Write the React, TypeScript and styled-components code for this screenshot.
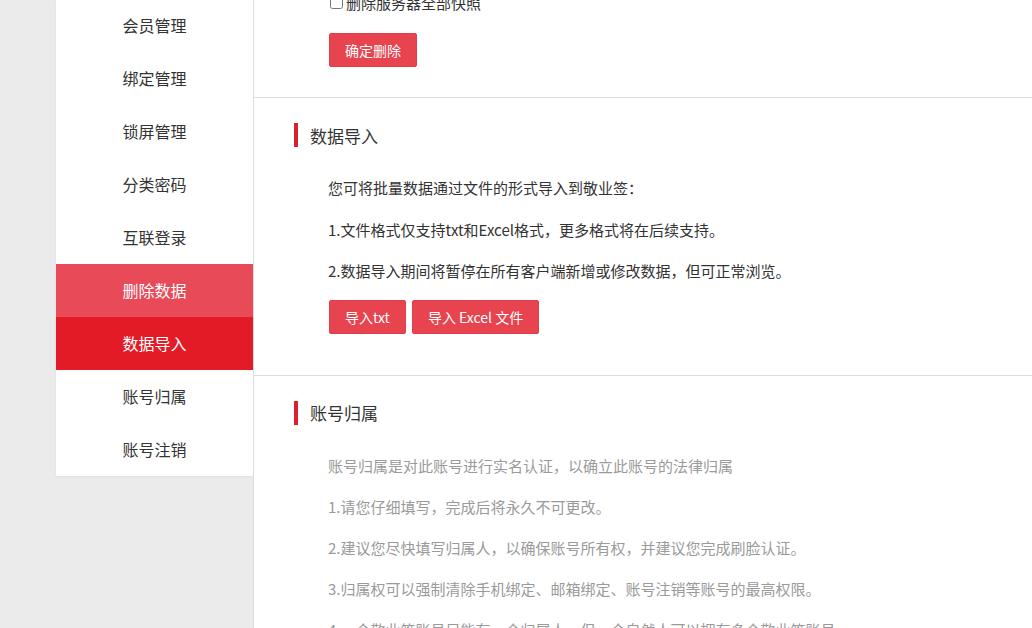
import React from "react";
import styled, { createGlobalStyle } from "styled-components";

const GlobalStyle = createGlobalStyle`
  html, body {
    margin: 0;
    padding: 0;
    background: #ebebeb;
  }
  body {
    font-family: "Noto Sans CJK SC", "Noto Sans", sans-serif;
    color: #333;
  }
`;

const Page = styled.div`
  display: flex;
  height: 628px;
  overflow: hidden;
  padding-left: 56px;
`;

const Sidebar = styled.ul`
  width: 197px;
  flex: none;
  align-self: flex-start;
  margin: 0;
  padding: 0;
  list-style: none;
  background: #fff;
  box-shadow: 0 1px 3px rgba(0, 0, 0, 0.05);
`;

const NavItem = styled.li<{ $state?: "hover" | "active" }>`
  height: 52.9px;
  display: flex;
  align-items: center;
  justify-content: center;
  padding-bottom: 2px;
  box-sizing: border-box;
  font-size: 16px;
  color: ${({ $state }) => ($state ? "#fff" : "#333")};
  background: ${({ $state }) =>
    $state === "active" ? "#e21b26" : $state === "hover" ? "#e84a58" : "#fff"};
  cursor: pointer;
`;

const Main = styled.main`
  flex: 1;
  background: #fff;
  border-left: 1px solid #dcdcdc;
  overflow: hidden;
`;

const Section = styled.section<{ $top?: number; $bottom: number; $offset?: number }>`
  padding: ${({ $top = 25 }) => $top}px 0 ${({ $bottom }) => $bottom}px;
  margin-top: ${({ $offset = 0 }) => $offset}px;
  border-bottom: 1px solid #dcdcdc;
`;

const Title = styled.h2`
  display: flex;
  align-items: center;
  gap: 12px;
  height: 24px;
  margin: 0 0 20px 40px;
  font-size: 17px;
  font-weight: normal;
  color: #333;

  &::before {
    content: "";
    width: 4px;
    height: 24px;
    background: #d9202c;
  }
`;

const Body = styled.div<{ $muted?: boolean }>`
  padding-left: 74px;
  font-size: 15px;
  color: ${({ $muted }) => ($muted ? "#9a9a9a" : "#333")};
`;

const Line = styled.p<{ $height?: number }>`
  margin: 0;
  line-height: ${({ $height = 41 }) => $height}px;
  white-space: nowrap;
`;

const CheckRow = styled.label`
  display: flex;
  align-items: center;
  gap: 3px;
  height: 22px;
  font-size: 15px;
  color: #333;

  input {
    width: 13px;
    height: 13px;
    margin: 0 0 0 2px;
  }
`;

const Actions = styled.div<{ $gap?: number }>`
  display: flex;
  gap: 6px;
  margin-top: ${({ $gap = 8 }) => $gap}px;
  padding-left: 1px;
`;

const Button = styled.button`
  height: 34px;
  padding: 0 15px;
  border: 1px solid #e03e4c;
  border-radius: 2px;
  background: #e8444f;
  color: #fff;
  font-family: inherit;
  font-size: 14px;
  cursor: pointer;
`;

const navItems = [
  "会员管理",
  "绑定管理",
  "锁屏管理",
  "分类密码",
  "互联登录",
  "删除数据",
  "数据导入",
  "账号归属",
  "账号注销",
];

const ownershipLines = [
  "账号归属是对此账号进行实名认证，以确立此账号的法律归属",
  "1.请您仔细填写，完成后将永久不可更改。",
  "2.建议您尽快填写归属人，以确保账号所有权，并建议您完成刷脸认证。",
  "3.归属权可以强制清除手机绑定、邮箱绑定、账号注销等账号的最高权限。",
  "4.一个敬业签账号只能有一个归属人，但一个自然人可以拥有多个敬业签账号。",
];

const App: React.FC = () => {
  return (
    <>
      <GlobalStyle />
      <Page>
        <Sidebar>
          {navItems.map((item) => (
            <NavItem
              key={item}
              $state={
                item === "删除数据" ? "hover" : item === "数据导入" ? "active" : undefined
              }
            >
              {item}
            </NavItem>
          ))}
        </Sidebar>

        <Main>
          <Section $top={0} $bottom={30} $offset={-9}>
            <Body>
              <CheckRow>
                <input type="checkbox" />
                删除服务器全部快照
              </CheckRow>
              <Actions $gap={20}>
                <Button>确定删除</Button>
              </Actions>
            </Body>
          </Section>

          <Section $bottom={41}>
            <Title>数据导入</Title>
            <Body>
              <Line $height={41.5}>您可将批量数据通过文件的形式导入到敬业签：</Line>
              <Line $height={41.5}>1.文件格式仅支持txt和Excel格式，更多格式将在后续支持。</Line>
              <Line $height={41.5}>2.数据导入期间将暂停在所有客户端新增或修改数据，但可正常浏览。</Line>
              <Actions>
                <Button>导入txt</Button>
                <Button>导入 Excel 文件</Button>
              </Actions>
            </Body>
          </Section>

          <Section $bottom={30}>
            <Title>账号归属</Title>
            <Body $muted>
              {ownershipLines.map((line) => (
                <Line key={line}>{line}</Line>
              ))}
            </Body>
          </Section>
        </Main>
      </Page>
    </>
  );
};

export default App;
